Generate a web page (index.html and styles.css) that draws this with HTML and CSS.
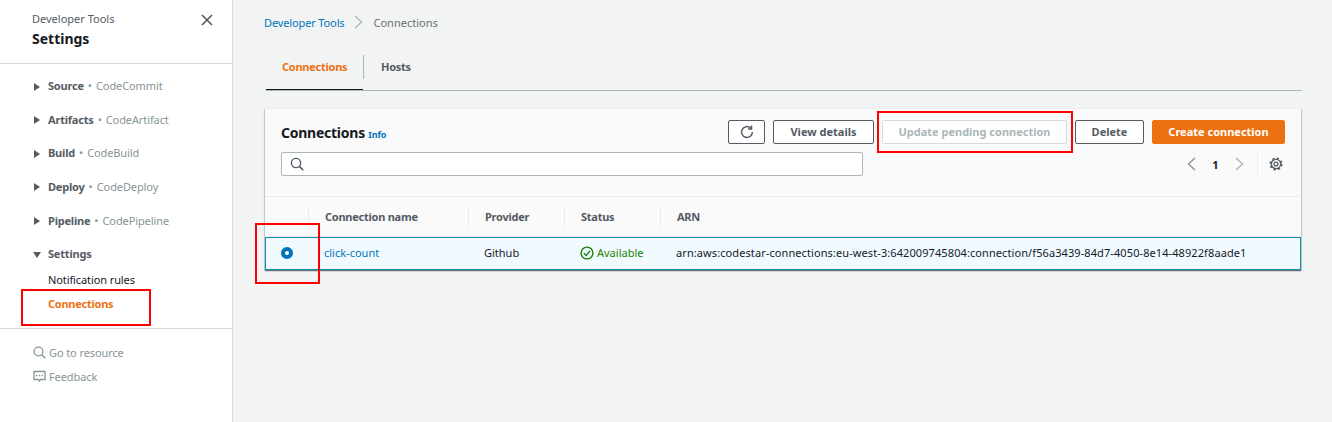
FILE: index.html
```html
<!DOCTYPE html>
<html lang="en">

<head>
  <meta charset="UTF-8">
  <meta name="viewport" content="width=device-width, initial-scale=1.0">
  <title>Connections</title>
  <link rel="stylesheet" href="styles.css">
</head>

<body>
  <div class="page">
    <aside class="sidebar">
      <div class="side-head">
        <div>
          <div class="side-sup">Developer Tools</div>
          <div class="side-title">Settings</div>
        </div>
        <svg class="side-close" width="12" height="12" viewBox="0 0 12 12"><path d="M1 1l10 10M11 1L1 11" fill="none" stroke="#545b64" stroke-width="1.6"/></svg>
      </div>

      <nav class="side-nav">
        <div class="nav-group"><span class="tri"></span><b>Source</b><span class="dot">•</span><span class="svc">CodeCommit</span></div>
        <div class="nav-group"><span class="tri"></span><b>Artifacts</b><span class="dot">•</span><span class="svc">CodeArtifact</span></div>
        <div class="nav-group"><span class="tri"></span><b>Build</b><span class="dot">•</span><span class="svc">CodeBuild</span></div>
        <div class="nav-group"><span class="tri"></span><b>Deploy</b><span class="dot">•</span><span class="svc">CodeDeploy</span></div>
        <div class="nav-group"><span class="tri"></span><b>Pipeline</b><span class="dot">•</span><span class="svc">CodePipeline</span></div>
        <div class="nav-group open"><span class="tri down"></span><b>Settings</b></div>
        <a class="sub-link">Notification rules</a>
        <a class="sub-link active">Connections</a>
      </nav>

      <div class="side-foot">
        <div class="foot-link">
          <svg width="13" height="13" viewBox="0 0 13 13"><circle cx="5.5" cy="5.5" r="4.4" fill="none" stroke="#879596" stroke-width="1.3"/><path d="M8.7 8.7l3.6 3.6" stroke="#879596" stroke-width="1.5"/></svg>
          Go to resource
        </div>
        <div class="foot-link">
          <svg width="13" height="13" viewBox="0 0 13 13"><path d="M1 1.5h11v8H7.5l-1 1.5-1-1.5H1z" fill="none" stroke="#879596" stroke-width="1.3"/><path d="M3 5.5h1.4M5.8 5.5h1.4M8.6 5.5H10" stroke="#879596" stroke-width="1.4"/></svg>
          Feedback
        </div>
      </div>
    </aside>

    <main class="main">
      <div class="crumbs">
        <a class="link">Developer Tools</a>
        <svg width="9" height="14" viewBox="0 0 9 14"><path d="M1 1l6.5 6L1 13" fill="none" stroke="#aab7b8" stroke-width="1.3"/></svg>
        <span>Connections</span>
      </div>

      <div class="tabs">
        <div class="tab active">Connections</div>
        <div class="tab">Hosts</div>
      </div>

      <section class="card">
        <div class="card-head">
          <div class="head-row">
            <h2>Connections <a class="info">Info</a></h2>
            <div class="actions">
              <button class="btn icon-btn">
                <svg width="14" height="14" viewBox="0 0 14 14"><path d="M12.4 7a5.4 5.4 0 1 1-1.7-3.9" fill="none" stroke="#545b64" stroke-width="1.5"/><path d="M11.5 0.5v3.4H8.1" fill="none" stroke="#545b64" stroke-width="1.5"/></svg>
              </button>
              <button class="btn view">View details</button>
              <button class="btn disabled">Update pending connection</button>
              <button class="btn del">Delete</button>
              <button class="btn primary">Create connection</button>
            </div>
          </div>
          <div class="tools-row">
            <div class="search">
              <svg width="14" height="14" viewBox="0 0 14 14"><circle cx="6" cy="6" r="4.6" fill="none" stroke="#545b64" stroke-width="1.4"/><path d="M9.4 9.4l3.8 3.8" stroke="#545b64" stroke-width="1.6"/></svg>
            </div>
            <div class="pager">
              <svg width="9" height="14" viewBox="0 0 9 14"><path d="M8 1L1.5 7 8 13" fill="none" stroke="#879596" stroke-width="1.4"/></svg>
              <span class="page-num">1</span>
              <svg width="9" height="14" viewBox="0 0 9 14"><path d="M1 1l6.5 6L1 13" fill="none" stroke="#aab7b8" stroke-width="1.4"/></svg>
              <span class="pager-sep"></span>
              <svg width="14" height="14" viewBox="0 0 14 14"><circle cx="7" cy="7" r="1.9" fill="none" stroke="#545b64" stroke-width="1.3"/><circle cx="7" cy="7" r="4.6" fill="none" stroke="#545b64" stroke-width="1.3"/><circle cx="7" cy="7" r="5.7" fill="none" stroke="#545b64" stroke-width="1.7" stroke-dasharray="2.3 2.18"/></svg>
            </div>
          </div>
        </div>

        <div class="tbl-row tbl-head">
          <div class="cell"></div>
          <div class="cell">Connection name</div>
          <div class="cell">Provider</div>
          <div class="cell">Status</div>
          <div class="cell">ARN</div>
        </div>
        <div class="tbl-row tbl-body">
          <div class="cell"><span class="radio"></span></div>
          <div class="cell"><a class="link">click-count</a></div>
          <div class="cell">Github</div>
          <div class="cell status">
            <svg width="14" height="14" viewBox="0 0 14 14"><circle cx="7" cy="7" r="5.9" fill="none" stroke="#1d8102" stroke-width="1.4"/><path d="M4 7.2l2.2 2.2L10 5" fill="none" stroke="#1d8102" stroke-width="1.4"/></svg>
            Available
          </div>
          <div class="cell arn">arn:aws:codestar-connections:eu-west-3:642009745804:connection/f56a3439-84d7-4050-8e14-48922f8aade1</div>
        </div>
      </section>
    </main>
  </div>

  <!-- red boxes drawn on top of the screenshot -->
  <div class="mark mark-nav"></div>
  <div class="mark mark-update"></div>
  <div class="mark mark-radio"></div>
</body>

</html>
```
FILE: styles.css
```css
* {
  box-sizing: border-box;
}

html,
body {
  margin: 0;
  height: 100%;
  overflow: hidden;
}

body {
  font-family: "Noto Sans", Arial, sans-serif;
  font-size: 11px;
  color: #16191f;
  background-color: #f2f3f3;
}

.page {
  display: flex;
  height: 422px;
}

.link {
  color: #0073bb;
}

/* sidebar */
.sidebar {
  width: 233px;
  flex: none;
  background-color: #fff;
  border-right: 1px solid #d5dbdb;
}

.side-head {
  height: 64px;
  padding: 11px 19px 0 32px;
  display: flex;
  justify-content: space-between;
  align-items: flex-start;
  border-bottom: 1px solid #d5dbdb;
}

.side-sup {
  color: #545b64;
  line-height: 16px;
}

.side-title {
  margin-top: 3px;
  font-size: 14px;
  font-weight: 700;
  line-height: 18px;
}

.side-close {
  margin-top: 3px;
}

.side-nav {
  height: 265px;
  padding: 12.7px 0 0 33px;
  border-bottom: 1px solid #d5dbdb;
}

.nav-group {
  display: flex;
  align-items: center;
  height: 18px;
  margin-bottom: 15.6px;
  color: #879596;
  white-space: nowrap;
}

.nav-group b {
  color: #545b64;
  letter-spacing: -0.2px;
}

.nav-group.open {
  margin-bottom: 8.3px;
}

.tri {
  width: 0;
  height: 0;
  margin: 2px 8px 0 1px;
  border-left: 6px solid #545b64;
  border-top: 4px solid transparent;
  border-bottom: 4px solid transparent;
}

.tri.down {
  margin: 2px 7px 0 0;
  border-top: 6px solid #545b64;
  border-left: 4px solid transparent;
  border-right: 4px solid transparent;
  border-bottom: 0;
}

.dot {
  margin: 0 4px;
}

.svc {
  letter-spacing: -0.1px;
}

.sub-link {
  display: block;
  margin: 0 0 6px 15px;
  line-height: 18px;
  letter-spacing: -0.1px;
}

.sub-link.active {
  color: #ec7211;
  font-weight: 700;
  letter-spacing: -0.25px;
}

.side-foot {
  padding: 14px 0 0 33px;
}

.foot-link {
  display: flex;
  align-items: center;
  gap: 3px;
  height: 18px;
  margin-bottom: 6px;
  color: #879596;
  letter-spacing: -0.1px;
}

/* main area */
.main {
  flex: 1;
  min-width: 0;
  padding: 13px 30px 0 32px;
}

.crumbs {
  display: flex;
  align-items: center;
  gap: 10px;
  height: 18px;
  margin-left: -1px;
  color: #687078;
}

.crumbs .link {
  letter-spacing: -0.13px;
}

.tabs {
  display: flex;
  align-items: center;
  height: 47px;
  padding-bottom: 1px;
  margin: 13px 0 17px 1px;
  border-bottom: 1px solid #aab7b8;
}

.tab {
  height: 24px;
  padding: 0 16px 0 17px;
  line-height: 24px;
  font-weight: 700;
  letter-spacing: -0.25px;
  color: #545b64;
}

.tab.active {
  width: 98px;
  padding-left: 16px;
  color: #ec7211;
  border-right: 1px solid #aab7b8;
  position: relative;
}

/* underline sits just above the tab strip border */
.tab.active::after {
  content: "";
  position: absolute;
  left: 0;
  right: 0;
  top: 34px;
  height: 1px;
  background-color: #16191f;
}

.card {
  width: 1036px;
  background-color: #fafafa;
  border-top: 1px solid #eaeded;
  box-shadow: 0 1px 1px 0 rgba(0, 28, 36, 0.3), 1px 1px 1px 0 rgba(0, 28, 36, 0.15), -1px 1px 1px 0 rgba(0, 28, 36, 0.15);
}

.card-head {
  height: 88px;
  padding: 11px 16px 0;
  border-bottom: 1px solid #eaeded;
}

.head-row,
.tools-row {
  display: flex;
  justify-content: space-between;
  align-items: center;
}

.head-row {
  height: 24px;
}

h2 {
  margin: 4px 0 0;
  font-size: 14px;
  font-weight: 700;
  line-height: 24px;
  letter-spacing: -0.25px;
}

.info {
  font-size: 9px;
  letter-spacing: -0.1px;
  color: #0073bb;
}

.actions {
  display: flex;
  gap: 8px;
}

.btn {
  height: 24px;
  padding: 0 16px 1px;
  font-family: inherit;
  font-size: 11px;
  font-weight: 700;
  color: #545b64;
  background-color: #fff;
  border: 1px solid #545b64;
  border-radius: 2px;
}

.icon-btn {
  width: 37px;
  padding: 0;
  display: flex;
  align-items: center;
  justify-content: center;
}

.view {
  width: 101px;
  padding: 0 0 1px;
}

.disabled {
  width: 185px;
  padding: 0 0 1px;
  color: #aab7b8;
  border-color: #d5dbdb;
}

.del {
  width: 69px;
  padding: 0 0 1px;
}

.primary {
  width: 133px;
  padding: 0 0 1px;
  color: #fff;
  background-color: #ec7211;
  border-color: #ec7211;
}

.tools-row {
  margin-top: 8px;
}

.search {
  width: 582px;
  height: 24px;
  padding-left: 8px;
  display: flex;
  align-items: center;
  background-color: #fff;
  border: 1px solid #aab7b8;
  border-radius: 2px;
}

.pager {
  display: flex;
  align-items: center;
  height: 24px;
  padding-right: 2px;
}

.page-num {
  width: 39px;
  text-align: center;
  font-weight: 700;
}

.pager-sep {
  width: 1px;
  height: 24px;
  margin: 0 11px 0 13px;
  background-color: #eaeded;
}

/* table */
.tbl-row {
  display: grid;
  grid-template-columns: 43px 160px 96px 96px 1fr;
}

.tbl-head {
  height: 40px;
  padding: 10px 0 9px;
  font-weight: 700;
  letter-spacing: -0.25px;
  color: #545b64;
  border-bottom: 1px solid #eaeded;
}

.tbl-head .cell {
  padding-left: 16px;
  line-height: 20px;
  border-left: 1px solid #eaeded;
}

.tbl-head .cell:first-child {
  border-left: 0;
}

.tbl-body {
  height: 33px;
  padding-bottom: 2px;
  align-items: center;
  background-color: #f1faff;
  border: 1px solid #0f8eb1;
  box-shadow: 0 1px 1px rgba(0, 28, 36, 0.15);
}

.tbl-body .cell {
  padding-left: 15px;
}

.tbl-body .cell:first-child {
  display: flex;
}

.status {
  display: flex;
  align-items: center;
  gap: 3px;
  color: #1d8102;
}

.arn {
  white-space: nowrap;
  letter-spacing: 0.09px;
}

.radio {
  width: 12px;
  height: 12px;
  background-color: #fff;
  border: 4px solid #0073bb;
  border-radius: 50%;
}

/* annotations */
.mark {
  position: absolute;
  border: 2px solid #f00;
}

.mark-nav {
  left: 21px;
  top: 289px;
  width: 130px;
  height: 37px;
}

.mark-update {
  left: 877px;
  top: 111px;
  width: 196px;
  height: 42px;
}

.mark-radio {
  left: 255px;
  top: 223px;
  width: 65px;
  height: 61px;
}
```
